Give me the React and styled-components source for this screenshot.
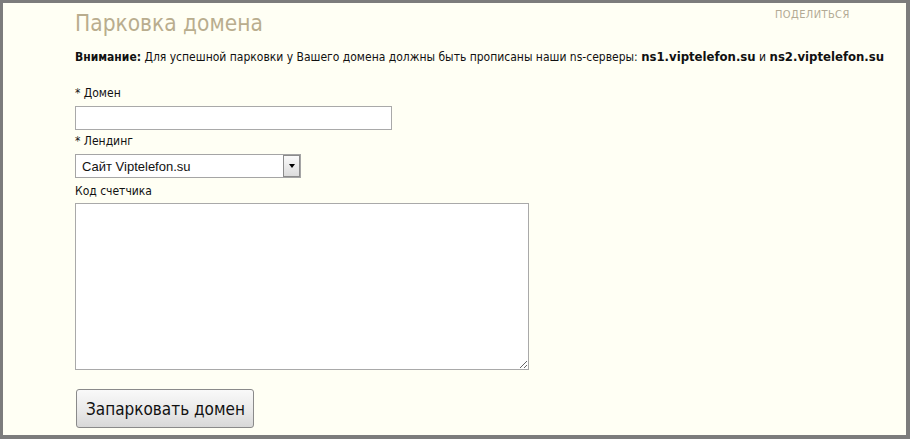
import React from "react";
import styled, { createGlobalStyle } from "styled-components";

const Global = createGlobalStyle`
  html, body { margin: 0; padding: 0; background: #fff; }
  * { box-sizing: border-box; }
`;

const Frame = styled.div`
  width: 910px;
  height: 439px;
  border-style: solid;
  border-color: #7c7c7c;
  border-width: 3px 4px 4px 3px;
  background: #fffff4;
  font-family: "DejaVu Sans Condensed", "DejaVu Sans", sans-serif;
  color: #111;
  overflow: hidden;
`;

const Content = styled.div`
  position: relative;
  padding: 7px 0 0 72px;
`;

const Title = styled.h1`
  margin: 0;
  font-size: 22.5px;
  font-weight: normal;
  color: #b9ad8e;
  line-height: 26px;
`;

const Share = styled.a`
  position: absolute;
  top: 5px;
  left: 772px;
  font-size: 11px;
  color: #b3aa94;
  text-decoration: none;
  letter-spacing: 0.4px;
`;

const Notice = styled.p`
  margin: 13px 0 0;
  font-size: 12px;
  line-height: 16px;
  white-space: nowrap;
  b { font-weight: bold; }
  strong { font-weight: bold; font-size: 13px; }
`;

const Form = styled.form`
  display: flex;
  flex-direction: column;
  align-items: flex-start;
  margin-top: 20px;
`;

const Label = styled.label`
  font-size: 12px;
  line-height: 16px;
  margin-bottom: ${p => p.$gap}px;
`;

const TextInput = styled.input`
  width: 317px;
  height: 24px;
  border: 1px solid #a9a9a9;
  background: #fff;
  margin: 0 0 3px;
`;

const SelectBox = styled.div`
  width: 226px;
  height: 24px;
  border: 1px solid #a5a5a5;
  background: #fff;
  display: flex;
  align-items: center;
  margin-bottom: 5px;
`;

const SelectText = styled.span`
  flex: 1;
  padding-left: 6px;
  font-family: "Liberation Sans", Arial, sans-serif;
  font-size: 13px;
`;

const Arrow = styled.span`
  width: 17px;
  height: 22px;
  border: 1px solid #8c8c8c;
  background: linear-gradient(#fafafa, #dcdcdc);
  display: flex;
  align-items: center;
  justify-content: center;
  &::after {
    content: "";
    border-left: 3px solid transparent;
    border-right: 3px solid transparent;
    border-top: 4px solid #000;
  }
`;

const TextArea = styled.textarea`
  width: 454px;
  height: 167px;
  border: 1px solid #a9a9a9;
  background: #fff;
  resize: both;
  margin: 0;
`;

const Button = styled.button`
  margin-top: 19px;
  margin-left: 1px;
  height: 39px;
  padding: 0 8px 0 9px;
  font-family: "DejaVu Sans Condensed", "DejaVu Sans", sans-serif;
  font-size: 17px;
  color: #111;
  border: 1px solid #8a8a8a;
  border-radius: 3px;
  background: linear-gradient(#f9f9f9, #e8e8e8 60%, #d8d8d8);
`;

export default function App() {
  return (
    <>
      <Global />
      <Frame>
        <Content>
          <Title>Парковка домена</Title>
          <Share href="#">ПОДЕЛИТЬСЯ</Share>
          <Notice>
            <b>Внимание:</b> Для успешной парковки у Вашего домена должны быть прописаны наши ns-серверы:{" "}
            <strong>ns1.viptelefon.su</strong> и <strong>ns2.viptelefon.su</strong>
          </Notice>
          <Form onSubmit={e => e.preventDefault()}>
            <Label $gap={5}>* Домен</Label>
            <TextInput type="text" />
            <Label $gap={5}>* Лендинг</Label>
            <SelectBox>
              <SelectText>Сайт Viptelefon.su</SelectText>
              <Arrow />
            </SelectBox>
            <Label $gap={4}>Код счетчика</Label>
            <TextArea />
            <Button type="submit">Запарковать домен</Button>
          </Form>
        </Content>
      </Frame>
    </>
  );
}
